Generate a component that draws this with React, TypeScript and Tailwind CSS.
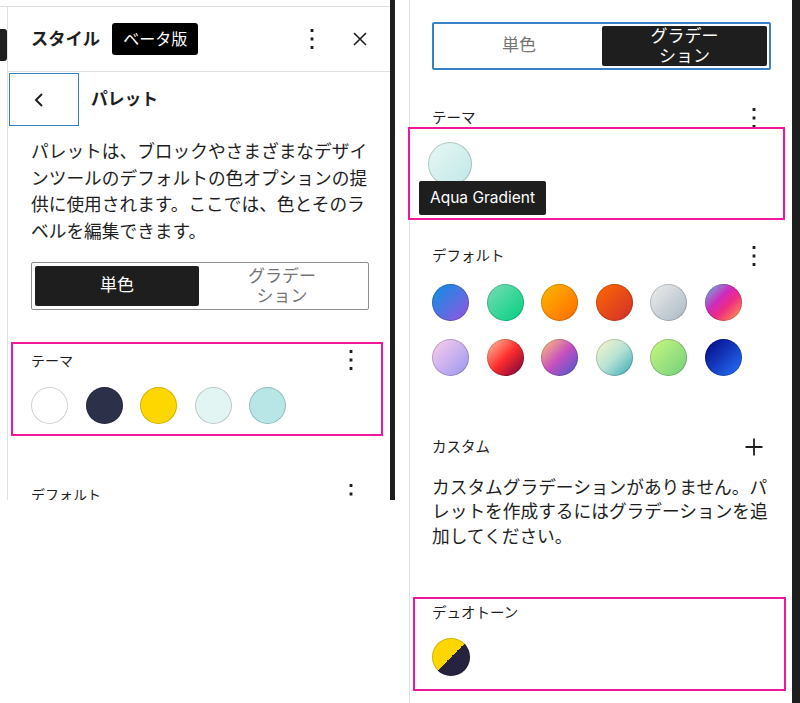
import React from "react";

const Kebab = () => (
  <svg width="34" height="34" viewBox="0 0 24 24" fill="#1e1e1e">
    <path d="M13 19h-2v-2h2v2zm0-6h-2v-2h2v2zm0-6h-2V5h2v2z" />
  </svg>
);

const CloseIcon = () => (
  <svg width="14" height="14" viewBox="0 0 14 14" fill="none" stroke="#1e1e1e" strokeWidth="1.6">
    <path d="M1 1L13 13M13 1L1 13" />
  </svg>
);

const ChevronLeft = () => (
  <svg width="11" height="14" viewBox="0 0 11 14" fill="none" stroke="#1e1e1e" strokeWidth="2">
    <path d="M9 1L3 7L9 13" />
  </svg>
);

const PlusIcon = () => (
  <svg width="18" height="18" viewBox="0 0 18 18" fill="none" stroke="#1e1e1e" strokeWidth="1.8">
    <path d="M9 0.5V17.5M0.5 9H17.5" />
  </svg>
);

const themeColors = [
  "bg-white",
  "bg-[#2c3149]",
  "bg-[#fed700]",
  "bg-[#e3f5f2]",
  "bg-[#b8e6e6]",
];

const defaultGradients = [
  "bg-[linear-gradient(135deg,rgb(6,147,227)_0%,rgb(155,81,224)_100%)]",
  "bg-[linear-gradient(135deg,rgb(122,220,180)_0%,rgb(0,208,130)_100%)]",
  "bg-[linear-gradient(135deg,rgb(252,185,0)_0%,rgb(255,105,0)_100%)]",
  "bg-[linear-gradient(135deg,rgb(255,105,0)_0%,rgb(207,46,46)_100%)]",
  "bg-[linear-gradient(135deg,rgb(238,238,238)_0%,rgb(169,184,195)_100%)]",
  "bg-[linear-gradient(135deg,rgb(74,234,220)_0%,rgb(151,120,209)_20%,rgb(207,42,186)_40%,rgb(238,44,130)_60%,rgb(251,105,98)_80%,rgb(254,248,76)_100%)]",
  "bg-[linear-gradient(135deg,rgb(255,206,236)_0%,rgb(152,150,240)_100%)]",
  "bg-[linear-gradient(135deg,rgb(254,205,165)_0%,rgb(254,45,45)_50%,rgb(107,0,62)_100%)]",
  "bg-[linear-gradient(135deg,rgb(255,203,112)_0%,rgb(199,81,192)_50%,rgb(65,88,208)_100%)]",
  "bg-[linear-gradient(135deg,rgb(255,245,203)_0%,rgb(182,227,212)_50%,rgb(51,167,181)_100%)]",
  "bg-[linear-gradient(135deg,rgb(202,248,128)_0%,rgb(113,206,126)_100%)]",
  "bg-[linear-gradient(135deg,rgb(2,3,129)_0%,rgb(40,116,252)_100%)]",
];

const Swatch = ({ color, size = "w-[37px] h-[37px]" }: { color: string; size?: string }) => (
  <div className={`${size} shrink-0 rounded-full ${color} shadow-[inset_0_0_0_1px_rgba(0,0,0,0.18)]`} />
);

const LeftPanel = () => (
  <div className="flex h-[500px] w-[409px] shrink-0">
    <div className="w-[390px] pt-[6px]">
      <div className="flex h-[494px] border-t border-[#e0e0e0]">
        <div className="w-[7px] shrink-0">
          <div className="mt-[22px] h-[32px] w-[7px] rounded-r-[3px] bg-[#1e1e1e]" />
        </div>
        <div className="flex-1 overflow-hidden border-l border-[#e0e0e0]">
          {/* header */}
          <div className="flex h-[65px] items-center border-b border-[#e0e0e0] pl-[23px] pr-[12px]">
            <span className="text-[17.3px] font-bold text-[#1e1e1e]">スタイル</span>
            <span className="ml-[12px] flex h-[32px] items-center rounded-[3px] bg-black px-[11px] text-[16px] text-white">
              ベータ版
            </span>
            <div className="flex-1" />
            <div className="flex h-[36px] w-[36px] items-center justify-center">
              <Kebab />
            </div>
            <div className="ml-[12px] flex h-[36px] w-[36px] items-center justify-center">
              <CloseIcon />
            </div>
          </div>
          {/* nav */}
          <div className="mt-[1px] flex items-center">
            <div className="ml-[1px] flex h-[53px] w-[70px] items-center border-[1.5px] border-[#3582c4] pl-[23px]">
              <ChevronLeft />
            </div>
            <span className="ml-[12px] text-[16.8px] font-bold text-[#1e1e1e]">パレット</span>
          </div>
          <p className="mt-[13px] px-[23px] text-[17.7px] leading-[26.5px] whitespace-nowrap text-[#1e1e1e]">
            パレットは、ブロックやさまざまなデザイ
            <br />
            ンツールのデフォルトの色オプションの提
            <br />
            供に使用されます。ここでは、色とそのラ
            <br />
            ベルを編集できます。
          </p>
          {/* segmented */}
          <div className="ml-[23px] mt-[17px] flex h-[48px] w-[338px] rounded-[2px] border border-[#8f8f8f] p-[3px]">
            <div className="flex w-[164px] items-center justify-center rounded-[2px] bg-[#1e1e1e] text-[17px] text-white">
              単色
            </div>
            <div className="flex flex-1 flex-col items-center justify-center text-[17px] leading-[20px] text-[#757575]">
              <span>グラデー</span>
              <span>ション</span>
            </div>
          </div>
          {/* theme highlighted */}
          <div className="ml-[3px] mt-[32px] h-[94px] w-[372px] border-2 border-[#f0179a] pl-[18px] pr-[13px]">
            <div className="flex h-[32px] items-center justify-between">
              <span className="text-[14px] text-[#1e1e1e]">テーマ</span>
              <Kebab />
            </div>
            <div className="mt-[11px] flex gap-[17.5px]">
              {themeColors.map((c, i) => (
                <Swatch key={i} color={c} />
              ))}
            </div>
          </div>
          <div className="mt-[42px] flex h-[32px] items-center justify-between pl-[23px] pr-[22px]">
            <span className="text-[14px] text-[#1e1e1e]">デフォルト</span>
            <Kebab />
          </div>
        </div>
      </div>
    </div>
    <div className="h-[500px] w-[5px] shrink-0 bg-[#1e1e1e]" />
  </div>
);

const RightPanel = () => (
  <div className="flex h-[703px] flex-1">
    <div className="flex-1 border-l border-[#e0e0e0]">
      {/* segmented */}
      <div className="ml-[22px] mt-[22px] flex h-[48px] w-[339px] rounded-[2px] border-2 border-[#3582c4] p-[2px]">
        <div className="flex flex-1 items-center justify-center text-[17px] text-[#757575]">単色</div>
        <div className="flex w-[165px] flex-col items-center justify-center rounded-[2px] bg-[#1e1e1e] text-[17px] leading-[20px] text-white">
          <span>グラデー</span>
          <span>ション</span>
        </div>
      </div>
      <div className="mt-[36px] flex h-[24px] items-center justify-between pl-[22px] pr-[21px]">
        <span className="text-[14.5px] text-[#1e1e1e]">テーマ</span>
        <Kebab />
      </div>
      {/* theme gradients highlighted */}
      <div className="relative -ml-[2px] -mt-[3px] h-[93px] w-[377px] border-2 border-[#f0179a] pl-[18px] pt-[13px]">
        <Swatch color="bg-[linear-gradient(135deg,#e8f7f5_0%,#bfe8e7_100%)]" size="w-[44px] h-[44px]" />
        <div className="absolute left-[9px] top-[52px] flex h-[34px] items-center rounded-[2px] bg-[#1e1e1e] px-[11px] text-[15.5px] text-white">
          Aqua Gradient
        </div>
      </div>
      <div className="mt-[24px] flex h-[24px] items-center justify-between pl-[22px] pr-[21px]">
        <span className="text-[14.5px] text-[#1e1e1e]">デフォルト</span>
        <Kebab />
      </div>
      <div className="ml-[22px] mt-[15.5px] grid grid-cols-[repeat(6,37px)] gap-x-[17.6px] gap-y-[18px]">
        {defaultGradients.map((g, i) => (
          <Swatch key={i} color={g} />
        ))}
      </div>
      <div className="mt-[59.5px] flex h-[24px] items-center justify-between pl-[22px] pr-[29px]">
        <span className="text-[14.5px] text-[#1e1e1e]">カスタム</span>
        <PlusIcon />
      </div>
      <p className="mt-[16.75px] px-[22px] text-[17.7px] leading-[24.5px] whitespace-nowrap text-[#1e1e1e]">
        カスタムグラデーションがありません。パ
        <br />
        レットを作成するにはグラデーションを追
        <br />
        加してください。
      </p>
      {/* duotone highlighted */}
      <div className="ml-[3px] mt-[47.75px] h-[94px] w-[373px] border-2 border-[#f0179a] pl-[17px] pt-[2px]">
        <div className="flex h-[24px] items-center">
          <span className="text-[14.5px] text-[#1e1e1e]">デュオトーン</span>
        </div>
        <div className="mt-[13px]">
          <Swatch color="bg-[linear-gradient(135deg,#fed700_50%,#25233f_50%)]" size="w-[38px] h-[38px]" />
        </div>
      </div>
    </div>
    <div className="h-[703px] w-[8px] shrink-0 bg-[#1e1e1e]" />
  </div>
);

export default function App() {
  return (
    <div className="flex h-[703px] w-[800px] overflow-hidden bg-white font-['Inter','Noto_Sans_CJK_JP',sans-serif]">
      <LeftPanel />
      <RightPanel />
    </div>
  );
}
